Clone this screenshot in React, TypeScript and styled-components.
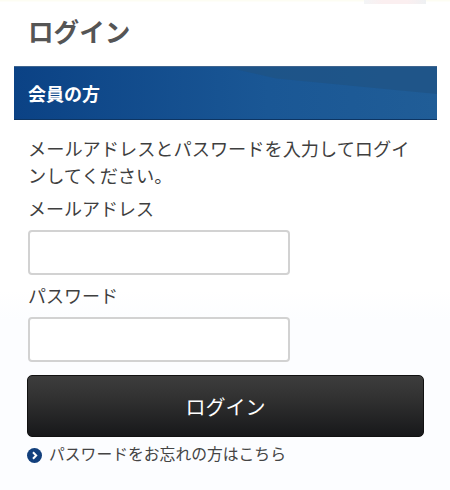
import styled, { createGlobalStyle } from 'styled-components'

const GlobalStyle = createGlobalStyle`
  html, body {
    margin: 0;
    padding: 0;
    background: #ffffff;
  }
  body {
    font-family: "Liberation Sans", "Noto Sans CJK JP", sans-serif;
  }
`

const App = () => {
  return (
    <>
      <GlobalStyle />
      <Page>
        <TopStrip>
          <TopTab />
        </TopStrip>
        <Title>ログイン</Title>
        <SectionBar>
          <SectionTitle>会員の方</SectionTitle>
        </SectionBar>
        <Body>
          <Lead>メールアドレスとパスワードを入力してログインしてください。</Lead>
          <FieldLabel htmlFor="email">メールアドレス</FieldLabel>
          <TextInput id="email" type="text" />
          <FieldLabel htmlFor="password">パスワード</FieldLabel>
          <TextInput id="password" type="password" />
          <LoginButton type="button">ログイン</LoginButton>
          <ForgotLink href="#">
            <svg width="15" height="15" viewBox="0 0 15 15">
              <circle cx="7.5" cy="7.5" r="7.5" fill="#123f7c" />
              <path d="M6 4.2 L9.2 7.5 L6 10.8" fill="none" stroke="#ffffff" strokeWidth="2" />
            </svg>
            パスワードをお忘れの方はこちら
          </ForgotLink>
        </Body>
      </Page>
    </>
  )
}

const Page = styled.div`
  width: 450px;
  height: 490px;
  overflow: hidden;
  background: linear-gradient(#ffffff 0, #ffffff 290px, #fcfdff 320px);
`

const TopStrip = styled.div`
  display: flex;
  justify-content: flex-end;
  height: 4px;
  padding-right: 24px;
  background: linear-gradient(#fdfdf3 0, #fdfdf3 1px, #ffffff 2px);
`

const TopTab = styled.div`
  width: 62px;
  height: 4px;
  background: linear-gradient(90deg, #f3f5f6, #fbeff0 30%, #fbeff0 70%, #eef1f3);
`

const Title = styled.h1`
  margin: 0;
  height: 62px;
  padding-left: 28px;
  font-size: 25.6px;
  line-height: 58px;
  font-weight: 700;
  color: #555555;
`

const SectionBar = styled.div`
  position: relative;
  display: flex;
  align-items: center;
  box-sizing: border-box;
  width: 423px;
  height: 54px;
  margin-left: 14px;
  padding-left: 14px;
  overflow: hidden;
  border-top: 1px solid #3f658f;
  border-bottom: 1px solid #0d3563;
  background: linear-gradient(90deg, #0b4285 0, #1a5795 60%, #205d97 100%);

  &::after {
    content: '';
    position: absolute;
    inset: 0;
    background: #1f5283;
    clip-path: polygon(50% 0, 100% 0, 100% 52%, 62% 22%);
    opacity: 0.7;
  }
`

const SectionTitle = styled.h2`
  position: relative;
  z-index: 1;
  margin: 0;
  font-size: 18px;
  font-weight: 700;
  color: #ffffff;
`

const Body = styled.div`
  display: flex;
  flex-direction: column;
  align-items: flex-start;
  padding: 17px 26px 0 28px;
`

const Lead = styled.p`
  margin: 0;
  width: 390px;
  font-size: 18.2px;
  line-height: 27px;
  color: #3f3f3f;
`

const FieldLabel = styled.label`
  display: block;
  margin-top: 6px;
  font-size: 18px;
  line-height: 27px;
  color: #3f3f3f;
`

const TextInput = styled.input`
  box-sizing: border-box;
  width: 262px;
  height: 45px;
  margin-top: 6px;
  margin-bottom: 3px;
  border: 2px solid #d2d2d2;
  border-radius: 4px;
  background: #ffffff;
  outline: none;
`

const LoginButton = styled.button`
  box-sizing: border-box;
  width: 397px;
  height: 62px;
  margin-top: 10px;
  margin-left: -1px;
  border: 1px solid #111111;
  border-radius: 5px;
  background: linear-gradient(#3d3d3d 0, #303030 40%, #17181a 100%);
  color: #ffffff;
  font-family: inherit;
  font-size: 20px;
  font-weight: 400;
  cursor: pointer;
`

const ForgotLink = styled.a`
  display: flex;
  align-items: center;
  gap: 7px;
  margin-top: 8px;
  margin-left: -1px;
  font-size: 15.8px;
  line-height: 20px;
  color: #444444;
  text-decoration: none;
`

export default App
